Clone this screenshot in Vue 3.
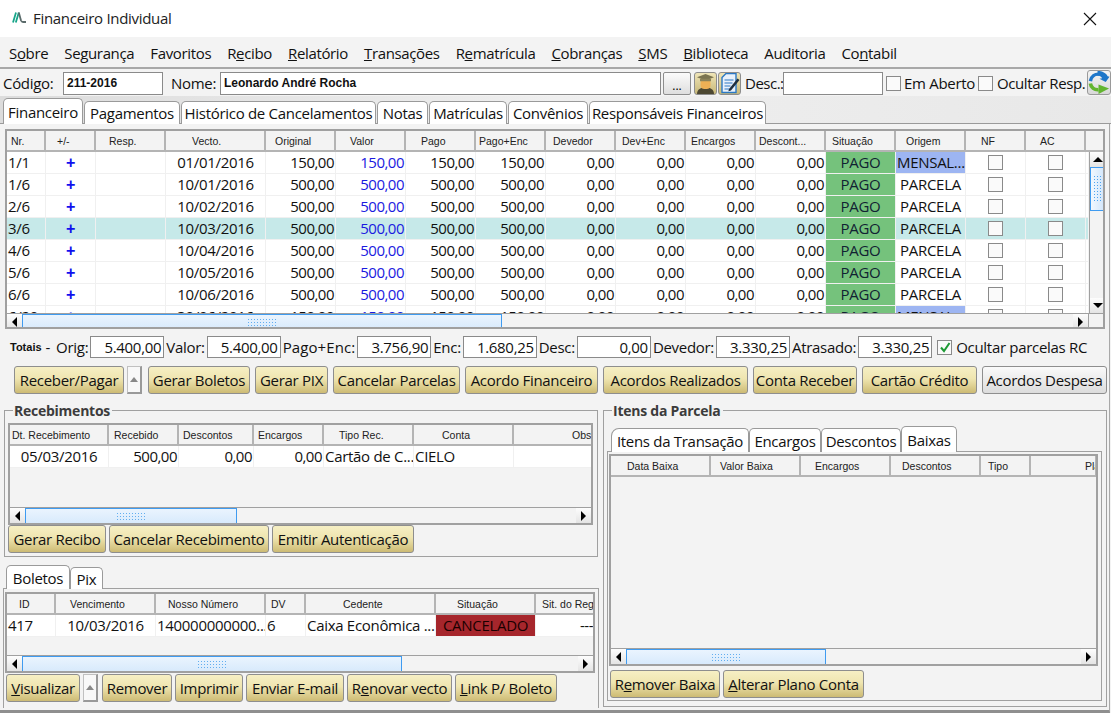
<script setup>
const menu = [
  ['S', 'o', 'bre'], ['Segurança', '', ''], ['Favoritos', '', ''], ['R', 'e', 'cibo'], ['', 'R', 'elatório'],
  ['', 'T', 'ransações'], ['R', 'e', 'matrícula'], ['', 'C', 'obranças'], ['', 'S', 'MS'], ['', 'B', 'iblioteca'],
  ['Auditoria', '', ''], ['Co', 'n', 'tabil']
]
const mainTabs = ['Financeiro', 'Pagamentos', 'Histórico de Cancelamentos', 'Notas', 'Matrículas', 'Convênios', 'Responsáveis Financeiros']
const mainCols = [
  ['Nr.', 39, 4], ['+/-', 50, 11], ['Resp.', 70, 13], ['Vecto.', 100, 26], ['Original', 70, 9], ['Valor', 70, 14], ['Pago', 70, 15], ['Pago+Enc', 70, 3],
  ['Devedor', 70, 7], ['Dev+Enc', 70, 6], ['Encargos', 70, 5], ['Descont...', 70, 3], ['Situação', 70, 6], ['Origem', 70, 10], ['NF', 60, 15], ['AC', 60, 14]
]
const rows = [
  ['1/1', '01/01/2016', '150,00', 'MENSAL...'],
  ['1/6', '10/01/2016', '500,00', 'PARCELA'],
  ['2/6', '10/02/2016', '500,00', 'PARCELA'],
  ['3/6', '10/03/2016', '500,00', 'PARCELA'],
  ['4/6', '10/04/2016', '500,00', 'PARCELA'],
  ['5/6', '10/05/2016', '500,00', 'PARCELA'],
  ['6/6', '10/06/2016', '500,00', 'PARCELA'],
  ['6/20', '30/06/2016', '150,00', 'MENSAL...']
]
const totals = [
  ['Orig:', '5.400,00'], ['Valor:', '5.400,00'], ['Pago+Enc:', '3.756,90'], ['Enc:', '1.680,25'],
  ['Desc:', '0,00'], ['Devedor:', '3.330,25'], ['Atrasado:', '3.330,25']
]
const actions = [
  ['Gerar Boletos', 102], ['Gerar PIX', 73], ['Cancelar Parcelas', 127], ['Acordo Financeiro', 133],
  ['Acordos Realizados', 145], ['Conta Receber', 104], ['Cartão Crédito', 115]
]
const recCols = [['Dt. Recebimento', 99, 2], ['Recebido', 70, 5], ['Descontos', 75, 4], ['Encargos', 70, 4], ['Tipo Rec.', 90, 15], ['Conta', 100, 28], ['Obs', 79, 58]]
const bolCols = [['ID', 49, 12], ['Vencimento', 100, 14], ['Nosso Número', 110, 12], ['DV', 40, 5], ['Cedente', 130, 37], ['Situação', 100, 21], ['Sit. do Reg', 60, 6]]
const baixaCols = [['Data Baixa', 100, 16], ['Valor Baixa', 90, 9], ['Encargos', 90, 14], ['Descontos', 90, 11], ['Tipo', 50, 7], ['Pla', 66, 54]]
const itemTabs = ['Itens da Transação', 'Encargos', 'Descontos', 'Baixas']
</script>

<template>
  <div class="app">
    <header class="title">
      <svg class="logo" width="14" height="11" viewBox="0 0 14 11">
        <path d="M1 10.500 4 .5M3.800 10.500 6.800 .5" stroke="#17a589" stroke-width="1.800" fill="none" />
        <path d="M6.800 .5 9 8.500Q9.600 10 11 10H14" stroke="#5b6b6b" stroke-width="1.800" fill="none" />
      </svg>
      <span class="title-text">Financeiro Individual</span>
      <svg class="close" width="14" height="14" viewBox="0 0 14 14">
        <path d="M1 1 13 13M13 1 1 13" stroke="#111" stroke-width="1.100" fill="none" />
      </svg>
    </header>

    <nav class="menu">
      <span v-for="(m, i) in menu" :key="i">{{ m[0] }}<u>{{ m[1] }}</u>{{ m[2] }}</span>
    </nav>

    <div class="toolbar">
      <label class="lbl-codigo">Código:</label>
      <div class="field bold w-cod">211-2016</div>
      <label class="lbl-nome">Nome:</label>
      <div class="field bold w-nome">Leonardo André Rocha</div>
      <button class="dots">...</button>
      <button class="icon-btn">
        <svg width="21" height="21" viewBox="0 0 21 21">
          <path d="M2 21c0-5 4-6.500 8.500-6.500S19 16 19 21z" fill="#4d4832" />
          <rect x="5.500" y="6" width="10" height="10" rx="4" fill="#eeb055" />
          <path d="M10.500 1 19 4.300 10.500 7.500 2 4.300z" fill="#7b7450" />
          <path d="M5 5.800v2.500h11v-2.500z" fill="#8b8259" />
        </svg>
      </button>
      <button class="icon-btn">
        <svg width="20" height="22" viewBox="0 0 20 22">
          <path d="M2 5.500 6 1.500h10v19H2z" fill="#e8f1fb" stroke="#2a78c4" stroke-width="1.400" />
          <path d="M4.500 8h9M4.500 11h8M4.500 14h6M4.500 17h5" stroke="#2a78c4" stroke-width="1.100" />
          <path d="M9 17 17.500 6.500l2 1.600L11 18.500l-2.600.8z" fill="#1f2f3f" />
        </svg>
      </button>
      <label class="lbl-desc">Desc.:</label>
      <div class="field w-desc"></div>
      <span class="check cb1"></span>
      <label class="lbl-aberto">Em Aberto</label>
      <span class="check cb2"></span>
      <label class="lbl-ocultar">Ocultar Resp.</label>
      <button class="refresh">
        <svg width="23" height="25" viewBox="0 0 23 25">
          <path d="M2.500 11C3.500 6 7.500 3.500 11.500 3.800" stroke="#1f77c9" stroke-width="3.600" fill="none" />
          <path d="M10 .5C15 .5 19 2.500 20.500 6l2 .5-4 5.500-6.500-3.500 2.800-.5c-1-1.500-2.800-2.500-5-2.700z" fill="#1f77c9" />
          <path d="M2.500 13.500C3 18 7 20.500 11 20" stroke="#62b52f" stroke-width="3.800" fill="none" />
          <path d="M11 14.500 22 18.800 11 24.500z" fill="#62b52f" />
        </svg>
      </button>
    </div>

    <div class="tab-strip">
      <div v-for="(t, i) in mainTabs" :key="t" class="tab" :class="{ active: i === 0 }">{{ t }}</div>
    </div>

    <main class="content">
      <section class="grid main-grid">
        <div class="grid-inner">
          <div class="grid-head">
            <div v-for="c in mainCols" :key="c[0]" class="hcell" :style="{ width: c[1] + 'px', paddingLeft: c[2] + 'px' }">{{ c[0] }}</div>
            <div class="hcell head-rest"></div>
          </div>
          <div class="main-body">
            <div class="rows">
              <div v-for="(r, i) in rows" :key="i" class="row" :class="{ sel: i === 3 }">
                <div class="cell" style="width:39px">{{ r[0] }}</div>
                <div class="cell plus" style="width:50px">+</div>
                <div class="cell" style="width:70px"></div>
                <div class="cell center" style="width:100px">{{ r[1] }}</div>
                <div class="cell right" style="width:70px">{{ r[2] }}</div>
                <div class="cell right blue" style="width:70px">{{ r[2] }}</div>
                <div class="cell right" style="width:70px">{{ r[2] }}</div>
                <div class="cell right" style="width:70px">{{ r[2] }}</div>
                <div class="cell right" style="width:70px">0,00</div>
                <div class="cell right" style="width:70px">0,00</div>
                <div class="cell right" style="width:70px">0,00</div>
                <div class="cell right" style="width:70px">0,00</div>
                <div class="cell center pago" style="width:70px">PAGO</div>
                <div class="cell center" :class="{ mensal: r[3] !== 'PARCELA' }" style="width:70px">{{ r[3] }}</div>
                <div class="cell cb-cell" style="width:60px"><span class="check"></span></div>
                <div class="cell cb-cell" style="width:60px"><span class="check"></span></div>
              </div>
            </div>
            <div class="vscroll">
              <span class="sb-btn up"></span>
              <span class="vthumb"><i class="dots-v"></i></span>
              <span class="vtrack"></span>
              <span class="sb-btn down"></span>
            </div>
          </div>
          <div class="hs-row">
            <div class="hscroll">
              <span class="sb-btn left"></span>
              <span class="hthumb" style="width:480px"><i class="dots-h"></i></span>
              <span class="htrack"></span>
              <span class="sb-btn rightb"></span>
            </div>
            <span class="corner"></span>
          </div>
        </div>
      </section>

      <div class="totals">
        <strong class="tot-title">Totais</strong><span class="tot-dash">-</span>
        <template v-for="t in totals" :key="t[0]">
          <label>{{ t[0] }}</label>
          <div class="field num">{{ t[1] }}</div>
        </template>
        <span class="check checked">
          <svg width="12" height="12" viewBox="0 0 12 12"><path d="M2 6.500 5 10 10.500 2" stroke="#1d9a35" stroke-width="2" fill="none" /></svg>
        </span>
        <label class="oc-parc">Ocultar parcelas RC</label>
      </div>

      <div class="actions">
        <button class="btn" style="width:110px">Receber/Pagar</button>
        <span class="mini"></span>
        <button v-for="a in actions" :key="a[0]" class="btn" :style="{ width: a[1] + 'px' }">{{ a[0] }}</button>
        <button class="btn plain" style="width:125px">Acordos Despesa</button>
      </div>

      <div class="lower">
        <div class="left-col">
          <fieldset class="group rec-group">
            <legend>Recebimentos</legend>
            <div class="grid rec-grid">
              <div class="grid-inner full">
                <div class="grid-head">
                  <div v-for="c in recCols" :key="c[0]" class="hcell" :style="{ width: c[1] + 'px', paddingLeft: c[2] + 'px' }">{{ c[0] }}</div>
                </div>
                <div class="row single">
                  <div class="cell center" style="width:99px">05/03/2016</div>
                  <div class="cell right" style="width:70px">500,00</div>
                  <div class="cell right" style="width:75px">0,00</div>
                  <div class="cell right" style="width:70px">0,00</div>
                  <div class="cell" style="width:90px">Cartão de C...</div>
                  <div class="cell" style="width:100px">CIELO</div>
                  <div class="cell" style="width:79px"></div>
                </div>
                <div class="grow"></div>
                <div class="hscroll">
                  <span class="sb-btn left"></span>
                  <span class="hthumb" style="width:212px"><i class="dots-h"></i></span>
                  <span class="htrack"></span>
                  <span class="sb-btn rightb"></span>
                </div>
              </div>
            </div>
            <div class="btn-row rec-btns">
              <button class="btn" style="width:98px">Gerar Recibo</button>
              <button class="btn" style="width:160px">Cancelar Recebimento</button>
              <button class="btn" style="width:142px">Emitir Autenticação</button>
            </div>
          </fieldset>

          <div class="sub-tabs">
            <div class="tab active">Boletos</div>
            <div class="tab">Pix</div>
          </div>
          <div class="bol-panel">
            <div class="grid bol-grid">
              <div class="grid-inner full">
                <div class="grid-head">
                  <div v-for="c in bolCols" :key="c[0]" class="hcell" :style="{ width: c[1] + 'px', paddingLeft: c[2] + 'px' }">{{ c[0] }}</div>
                </div>
                <div class="row single">
                  <div class="cell" style="width:49px">417</div>
                  <div class="cell center" style="width:100px">10/03/2016</div>
                  <div class="cell" style="width:110px">140000000000...</div>
                  <div class="cell" style="width:40px">6</div>
                  <div class="cell" style="width:130px">Caixa Econômica ...</div>
                  <div class="cell center cancel" style="width:100px">CANCELADO</div>
                  <div class="cell right" style="width:59px">---</div>
                </div>
                <div class="grow"></div>
                <div class="hscroll">
                  <span class="sb-btn left"></span>
                  <span class="hthumb" style="width:380px"><i class="dots-h"></i></span>
                  <span class="htrack"></span>
                  <span class="sb-btn rightb"></span>
                </div>
              </div>
            </div>
            <div class="btn-row bol-btns">
              <button class="btn" style="width:74px"><u>V</u>isualizar</button>
              <span class="mini"></span>
              <button class="btn" style="width:70px">Remover</button>
              <button class="btn" style="width:68px">Imprimir</button>
              <button class="btn" style="width:98px">Enviar E-mail</button>
              <button class="btn" style="width:105px">R<u>e</u>novar vecto</button>
              <button class="btn" style="width:102px"><u>L</u>ink P/ Boleto</button>
            </div>
          </div>
        </div>

        <fieldset class="group right-group">
          <legend>Itens da Parcela</legend>
          <div class="item-tabs">
            <div v-for="(t, i) in itemTabs" :key="t" class="tab" :class="{ active: i === 3 }">{{ t }}</div>
          </div>
          <div class="item-panel">
            <div class="grid baixa-grid">
              <div class="grid-inner full">
                <div class="grid-head">
                  <div v-for="c in baixaCols" :key="c[0]" class="hcell" :style="{ width: c[1] + 'px', paddingLeft: c[2] + 'px' }">{{ c[0] }}</div>
                </div>
                <div class="grow"></div>
                <div class="hscroll">
                  <span class="sb-btn left"></span>
                  <span class="hthumb" style="width:200px"><i class="dots-h"></i></span>
                  <span class="htrack"></span>
                  <span class="sb-btn rightb"></span>
                </div>
              </div>
            </div>
            <div class="btn-row baixa-btns">
              <button class="btn" style="width:110px">R<u>e</u>mover Baixa</button>
              <button class="btn" style="width:141px"><u>A</u>lterar Plano Conta</button>
            </div>
          </div>
        </fieldset>
      </div>
    </main>
  </div>
</template>

<style>
html, body { margin: 0; background: #fff; }
</style>

<style scoped>
.app {
  width: 1111px;
  height: 713px;
  overflow: hidden;
  background: #f3f3f3;
  font-family: "Open Sans", "Noto Sans", sans-serif;
  font-size: 15px;
  letter-spacing: -0.3px;
  color: #111;
}
.title {
  height: 37px;
  background: #fff;
  display: flex;
  align-items: center;
  padding: 0 0 2px 12px;
  box-sizing: border-box;
}
.logo { margin-right: 7px; }
.title-text { font-size: 15px; color: #222; }
.close { margin-left: auto; margin-right: 14px; margin-top: 2px; }
.menu {
  height: 32px;
  box-sizing: border-box;
  border-bottom: 2px solid #a8a8a8;
  display: flex;
  align-items: center;
  gap: 16px;
  padding: 2px 0 0 9px;
  font-size: 15px;
  letter-spacing: -0.35px;
}
.toolbar {
  height: 27px;
  box-sizing: border-box;
  display: flex;
  align-items: center;
  background: #f3f3f3;
  padding-top: 1px;
}
.field {
  height: 23px;
  box-sizing: border-box;
  border: 1px solid #8a8a8a;
  background: #fff;
  display: flex;
  align-items: center;
  padding: 0 3px;
  flex: none;
}
.field.bold { font-family: "Liberation Sans", sans-serif; font-weight: 700; font-size: 12px; letter-spacing: 0; }
.lbl-codigo { margin-left: 3px; width: 60px; flex: none; }
.w-cod { width: 100px; }
.lbl-nome { margin-left: 8px; width: 49px; flex: none; }
.w-nome { width: 441px; }
.dots {
  width: 28px; height: 23px; margin-left: 2px; flex: none;
  border: 1px solid #8d8d8d; border-radius: 2px;
  background: linear-gradient(#fbfbfb, #dedede);
  font-size: 12px; padding: 4px 0 0; font-family: inherit;
}
.icon-btn {
  width: 23px; height: 23px; margin-left: 1px; padding: 0; flex: none;
  border: 1px solid #8d8d8d; border-radius: 3px;
  background: linear-gradient(#efe5b8, #c8b878);
  display: flex; align-items: center; justify-content: center; overflow: hidden;
}
.dots + .icon-btn { margin-left: 3px; }
.lbl-desc { margin-left: 4px; width: 38px; flex: none; letter-spacing: -0.5px; }
.w-desc { width: 100px; }
.check {
  display: inline-flex; align-items: center; justify-content: center;
  width: 15px; height: 15px; box-sizing: border-box;
  border: 1px solid #8a8a8a; background: #fafafa; flex: none;
}
.cb1 { margin-left: 3px; }
.lbl-aberto { margin-left: 3px; width: 74px; flex: none; white-space: nowrap; }
.lbl-ocultar { margin-left: 4px; width: 90px; flex: none; white-space: nowrap; letter-spacing: -0.4px; }
.refresh {
  width: 24px; height: 25px; padding: 0; margin-top: -1px; flex: none;
  border: 1px solid #9a9a9a; border-radius: 3px;
  background: linear-gradient(#f4f4f4, #d8d8d8);
  display: flex; align-items: center; justify-content: center; overflow: hidden;
}
.tab-strip {
  height: 28px;
  box-sizing: border-box;
  padding: 2px 0 0 3px;
  display: flex;
  align-items: flex-end;
  border-bottom: 1px solid #9a9a9a;
  background: linear-gradient(90deg, #dcdcdc, #efefef 50%, #e8e8e8);
}
.tab {
  height: 23px;
  box-sizing: border-box;
  padding: 0 2px;
  background: #fff;
  border: 1px solid #9a9a9a;
  border-bottom: none;
  border-radius: 5px 5px 0 0;
  display: flex;
  align-items: center;
  justify-content: center;
  margin-left: 1px;
  white-space: nowrap;
  margin-bottom: -1px;
  position: relative;
}
.tab.active { height: 26px; z-index: 1; margin-left: 0; }
.tab-strip .tab:nth-child(1) { width: 80px; }
.tab-strip .tab:nth-child(2) { width: 96px; }
.tab-strip .tab:nth-child(3) { width: 195px; }
.tab-strip .tab:nth-child(4) { width: 51px; }
.tab-strip .tab:nth-child(5) { width: 78px; }
.tab-strip .tab:nth-child(6) { width: 80px; }
.tab-strip .tab:nth-child(7) { width: 177px; }
.content {
  height: 589px;
  box-sizing: border-box;
  padding: 5px 2px 0 5px;
  border-right: 1px solid #a8a8a8;
  border-bottom: 3px solid #8f8f8f;
  margin-right: 1px;
}
.grid { border: 2px solid #a0a0a0; box-sizing: border-box; background: #f3f3f3; overflow: hidden; }
.main-grid { width: 1100px; height: 200px; }
.grid-inner { display: flex; flex-direction: column; height: 100%; }
.grid-head { display: flex; height: 21px; flex: none; overflow: hidden; }
.hcell {
  flex: none;
  box-sizing: border-box;
  border: 1px solid #b4b4b4;
  border-width: 0 2px 2px 0;
  font-family: "Liberation Sans", sans-serif;
  font-size: 10.500px;
  letter-spacing: 0;
  color: #222;
  display: flex;
  align-items: center;
  white-space: nowrap;
  overflow: hidden;
  background: #f3f3f3;
}
.head-rest { width: 20px; }
.main-body { display: flex; height: 161px; flex: none; overflow: hidden; }
.rows { width: 1081px; flex: none; background: #fff; overflow: hidden; }
.row { display: flex; height: 22px; box-sizing: border-box; border-bottom: 1px solid #f0f0f0; background: #fff; }
.row.sel, .row.sel .cell { background: #c6e9e9; }
.cell {
  flex: none;
  box-sizing: border-box;
  height: 21px;
  line-height: 21px;
  border-right: 1px solid #f0f0f0;
  white-space: nowrap;
  overflow: hidden;
  padding: 0 1px;
  background: #fff;
}
.right { text-align: right; letter-spacing: -0.500px; }
.center { text-align: center; }
.blue { color: #1a1ae0; }
.plus { text-align: center; color: #1010ee; font-weight: 800; font-family: "Liberation Sans", sans-serif; font-size: 16px; }
.cell.pago { background: #75c27c; color: #123; }
.row.sel .cell.pago { background: #75c27c; }
.cell.mensal { background: #9db5f2; padding-left: 1px; text-align: left; }
.cb-cell { display: flex; align-items: center; justify-content: center; padding: 0; }
.cell.cancel { background: #a6262c; color: #1a0000; }
.vscroll { width: 15px; margin-left: 1px; display: flex; flex-direction: column; border-left: 1px solid #a0a0a0; }
.sb-btn {
  display: flex; flex: none; align-items: center; justify-content: center;
  width: 15px; height: 15px; background: linear-gradient(#fdfdfd, #e4e4e4);
  box-sizing: border-box;
}
.sb-btn::before { content: ""; width: 0; height: 0; border: 5px solid transparent; }
.up::before { border-bottom: 5px solid #000; border-top: 0; }
.down::before { border-top: 5px solid #000; border-bottom: 0; }
.left::before { border-right: 5px solid #000; border-left: 0; }
.rightb::before { border-left: 5px solid #000; border-right: 0; }
.vthumb {
  height: 44px; flex: none; box-sizing: border-box;
  border: 1px solid #3f9bf0; background: linear-gradient(90deg, #f2f8fe, #d2e6fb);
  display: flex; align-items: center; justify-content: center;
}
.dots-v { width: 9px; height: 28px; background-image: radial-gradient(#4ea4f0 40%, transparent 45%); background-size: 3px 3px; }
.vtrack { flex: 1; background: #f3f3f3; }
.hs-row { display: flex; height: 15px; flex: none; border-top: 1px solid #a0a0a0; }
.hs-row .hscroll { width: 1081px; border-top: none; }
.corner { width: 17px; flex: none; border-left: 1px solid #a0a0a0; background: #f3f3f3; }
.hscroll { display: flex; height: 15px; flex: none; border-top: 1px solid #a0a0a0; background: #f3f3f3; }
.hthumb {
  flex: none; box-sizing: border-box;
  border: 1px solid #3f9bf0; border-bottom: none;
  background: linear-gradient(#eaf4fe, #d8eafc);
  display: flex; align-items: center; justify-content: center;
}
.dots-h { width: 30px; height: 9px; background-image: radial-gradient(#62aef0 40%, transparent 45%); background-size: 3px 3px; }
.htrack { flex: 1; }
.totals {
  display: flex;
  align-items: center;
  height: 22px;
  margin-top: 7px;
  gap: 2px;
  padding-left: 5px;
  white-space: nowrap;
}
.totals label:nth-of-type(3) { letter-spacing: 0.1px; }
.tot-title { font-family: "Liberation Sans", sans-serif; font-size: 11px; letter-spacing: 0; }
.tot-dash { margin: 0 4px 0 2px; }
.field.num { height: 22px; width: 74px; justify-content: flex-end; padding: 0 2px; }
.checked { margin-left: 3px; }
.oc-parc { margin-left: 2px; }
.actions {
  display: flex;
  align-items: center;
  gap: 5px;
  height: 28px;
  margin-top: 8px;
  padding-left: 9px;
}
.btn {
  flex: none;
  height: 28px;
  padding: 0;
  box-sizing: border-box;
  border: 1px solid #8e8e8e;
  border-radius: 3px;
  background: linear-gradient(#f6efc4, #efe5b0 45%, #cdbb74);
  font-family: inherit;
  font-size: 15px;
  letter-spacing: -0.3px;
  color: #111;
  white-space: nowrap;
}
.btn.plain { background: linear-gradient(#fafafa, #dcdcdc); }
.mini {
  flex: none;
  width: 15px; height: 28px; box-sizing: border-box; margin: 0 1px 0 -2px;
  background: #f8f8f8; border: 1px solid #c0c0c0; border-right: 2px solid #999; border-bottom: 2px solid #999;
  display: flex; align-items: center; justify-content: center;
}
.mini::before { content: ""; border: 4px solid transparent; border-bottom: 5px solid #888; border-top: 0; }
.lower { display: flex; margin-top: 7px; gap: 5px; align-items: flex-start; margin-left: -1px; }
.left-col { width: 594px; flex: none; }
.group {
  margin: 0;
  padding: 0;
  border: 1px solid #a0a0a0;
  box-sizing: border-box;
  min-width: 0;
}
legend {
  margin-left: 5px;
  padding: 0 2px 0 1px;
  font-size: 14px;
  letter-spacing: -0.25px;
  font-weight: 700;
  color: #3c3c3c;
  line-height: 19px;
}
.rec-group { height: 156px; padding: 3px 3px 0; }
.rec-grid { height: 102px; width: 585px; }
.btn-row { display: flex; gap: 3px; margin-top: 2px; }
.rec-btns { margin-top: 0; }
.full { height: 100%; }
.grow { flex: 1; background: #f3f3f3; }
.single { flex: none; }
.sub-tabs { display: flex; align-items: flex-end; height: 24px; margin-top: 7px; padding-left: 2px; position: relative; z-index: 1; }
.sub-tabs .tab { height: 22px; width: 33px; }
.sub-tabs .tab.active { height: 24px; width: 64px; }
.sub-tabs .tab + .tab { margin-left: 0; }
.bol-panel { height: 120px; box-sizing: border-box; border: 1px solid #a0a0a0; border-bottom: none; padding: 3px 1px 0; margin-left: -1px; width: 596px; }
.bol-grid { height: 81px; width: 590px; }
.bol-btns { margin-top: 1px; padding-left: 1px; }
.bol-btns .mini { margin: 0 1px 0 0; }
.right-group { width: 504px; height: 306px; padding: 0 4px 0 3px; flex: none; }
.item-tabs { display: flex; align-items: flex-end; height: 32px; padding-left: 4px; margin-top: -1px; position: relative; z-index: 1; }
.item-tabs .tab { height: 24px; margin-left: 0; }
.item-tabs .tab:nth-child(1) { width: 138px; border-radius: 8px 5px 0 0; }
.item-tabs .tab:nth-child(2) { width: 72px; }
.item-tabs .tab:nth-child(3) { width: 80px; }
.item-tabs .tab:nth-child(4) { width: 56px; height: 26px; }
.item-panel { border: 1px solid #a0a0a0; height: 250px; box-sizing: border-box; padding: 2px 3px 0 1px; }
.baixa-grid { height: 212px; width: 489px; }
.baixa-btns { margin: 4px 0 0 1px; }
</style>
